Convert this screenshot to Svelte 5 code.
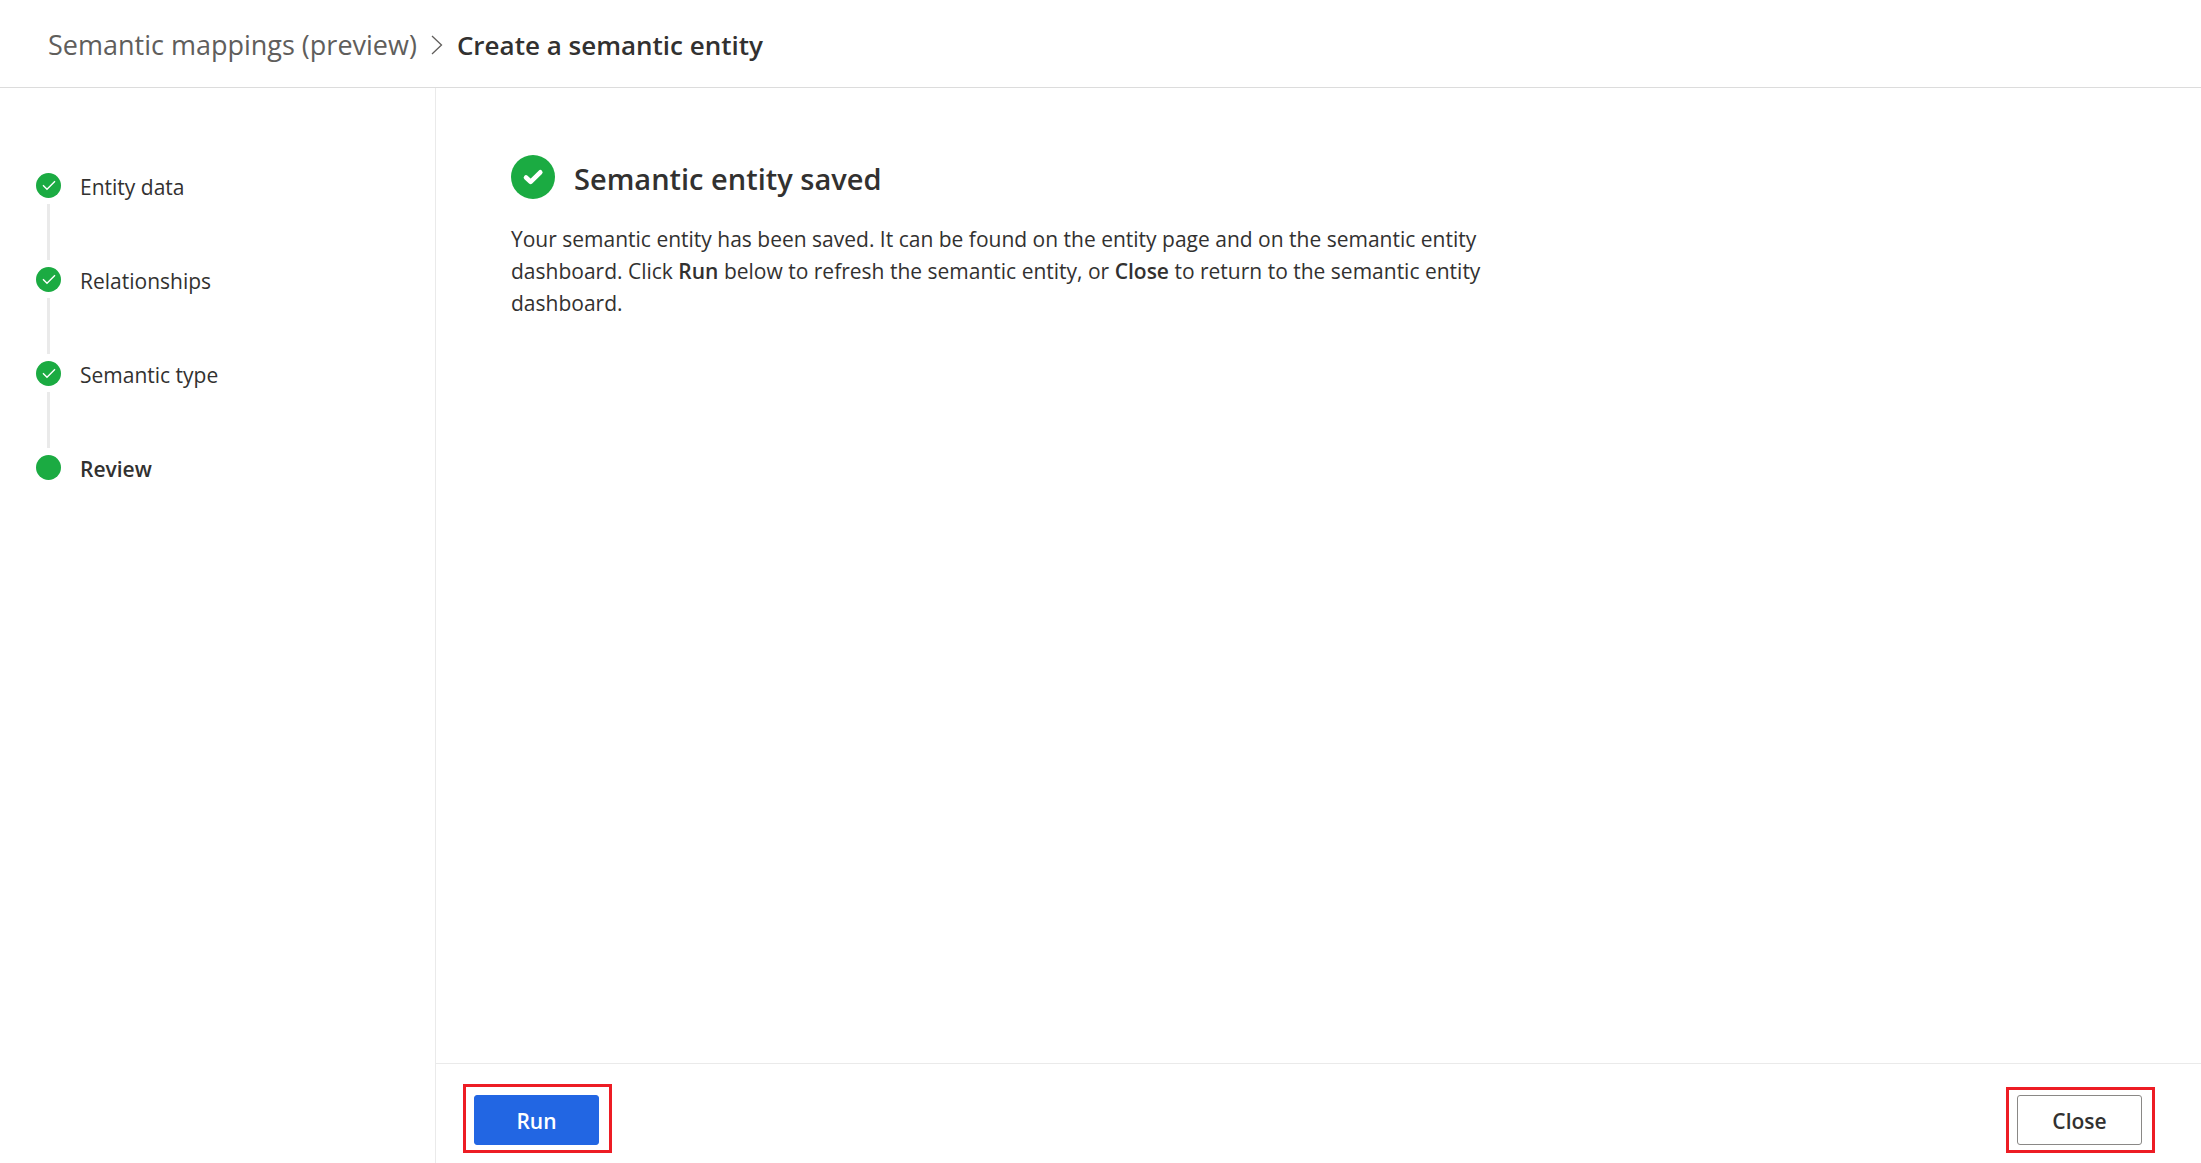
<script>
  const steps = [
    { label: 'Entity data', done: true },
    { label: 'Relationships', done: true },
    { label: 'Semantic type', done: true },
    { label: 'Review', done: false }
  ];
</script>

<div class="page">
  <header>
    <nav aria-label="Breadcrumb">
      <a href="#mappings">Semantic mappings (preview)</a>
      <svg class="chevron" viewBox="0 0 12 20" aria-hidden="true">
        <path d="M1 1 L10.500 10 L1 19" />
      </svg>
      <span class="current" aria-current="page">Create a semantic entity</span>
    </nav>
  </header>

  <div class="body">
    <aside>
      <ol>
        {#each steps as step}
          <li class:active={!step.done}>
            <div class="rail">
              <svg class="dot" viewBox="0 0 25 25" aria-hidden="true">
                <circle cx="12.500" cy="12.500" r="12.500" />
                {#if step.done}
                  <path d="M7 12.200 L11 16.200 L19 8.200" />
                {/if}
              </svg>
              <span class="line"></span>
            </div>
            <span class="label">{step.label}</span>
          </li>
        {/each}
      </ol>
    </aside>

    <div class="content">
      <main>
        <div class="title">
          <svg viewBox="0 0 44 44" aria-hidden="true">
            <circle cx="22" cy="22" r="22" />
            <path d="M15 22.500 L19.600 26.800 L29.300 17.300" />
          </svg>
          <h1>Semantic entity saved</h1>
        </div>
        <p>
          Your semantic entity has been saved. It can be found on the entity page and on the semantic entity
          dashboard. Click <strong>Run</strong> below to refresh the semantic entity, or <strong>Close</strong> to return to the semantic entity
          dashboard.
        </p>
      </main>

      <footer>
        <div class="frame tall"><button class="primary" type="button">Run</button></div>
        <div class="frame"><button type="button">Close</button></div>
      </footer>
    </div>
  </div>
</div>

<style>
  :global(body) {
    background: #fff;
  }

  .page {
    display: flex;
    flex-direction: column;
    min-height: 100vh;
    color: #323130;
    font-family: 'Open Sans', 'Noto Sans', sans-serif;
    font-size: 21px;
    line-height: 32px;
  }

  header {
    padding: 25px 48px 22px;
    border-bottom: 1px solid #dcdcdc;
    font-size: 27px;
    line-height: 40px;
  }

  nav {
    display: flex;
    align-items: center;
    gap: 14px;
  }

  nav a {
    color: #605e5c;
    text-decoration: none;
  }

  .chevron {
    width: 12px;
    height: 20px;
    fill: none;
    stroke: #605e5c;
    stroke-width: 1.3;
  }

  .current {
    font-size: 26px;
    font-weight: 600;
  }

  .body {
    display: flex;
    flex: 1;
  }

  aside {
    box-sizing: border-box;
    width: 436px;
    flex-shrink: 0;
    padding: 85px 36px;
    border-right: 1px solid #eaeaea;
  }

  ol {
    margin: 0;
    padding: 0;
    list-style: none;
  }

  li {
    display: flex;
    gap: 19px;
    height: 94px;
  }

  li.active {
    font-weight: 600;
  }

  .rail {
    display: flex;
    flex-direction: column;
    align-items: center;
    gap: 6px;
  }

  .dot {
    width: 25px;
    height: 25px;
  }

  circle {
    fill: #1bab42;
  }

  .dot path {
    fill: none;
    stroke: #fff;
    stroke-width: 1.4;
  }

  .line {
    width: 3px;
    height: 56px;
    background: #eaeaea;
  }

  li:last-child .line {
    display: none;
  }

  .label {
    line-height: 28px;
  }

  .content {
    display: flex;
    flex: 1;
    flex-direction: column;
    min-width: 0;
  }

  main {
    flex: 1;
    padding: 67px 75px;
  }

  .title {
    display: flex;
    gap: 19px;
  }

  .title svg {
    width: 44px;
    height: 44px;
  }

  .title path {
    fill: none;
    stroke: #fff;
    stroke-width: 4.6;
    stroke-linecap: round;
    stroke-linejoin: round;
  }

  h1 {
    margin: 0;
    font-size: 29px;
    font-weight: 600;
    line-height: 48px;
  }

  p {
    max-width: 976px;
    margin: 20px 0 0;
  }

  strong {
    font-weight: 600;
  }

  footer {
    display: flex;
    align-items: flex-end;
    justify-content: space-between;
    padding: 20px 46px 10px 27px;
    border-top: 1px solid #eaeaea;
  }

  .frame {
    padding: 5px 10px 5px 8px;
    border: 3px solid #ed1c24;
  }

  .frame.tall {
    padding-top: 8px;
  }

  button {
    display: block;
    box-sizing: border-box;
    min-width: 125px;
    height: 50px;
    padding: 2px 6px 0;
    border: 1px solid #8a8886;
    border-radius: 3px;
    background: #fff;
    color: #323130;
    font: inherit;
    font-weight: 600;
  }

  button.primary {
    border-color: #2266e3;
    background: #2266e3;
    color: #fff;
  }
</style>
